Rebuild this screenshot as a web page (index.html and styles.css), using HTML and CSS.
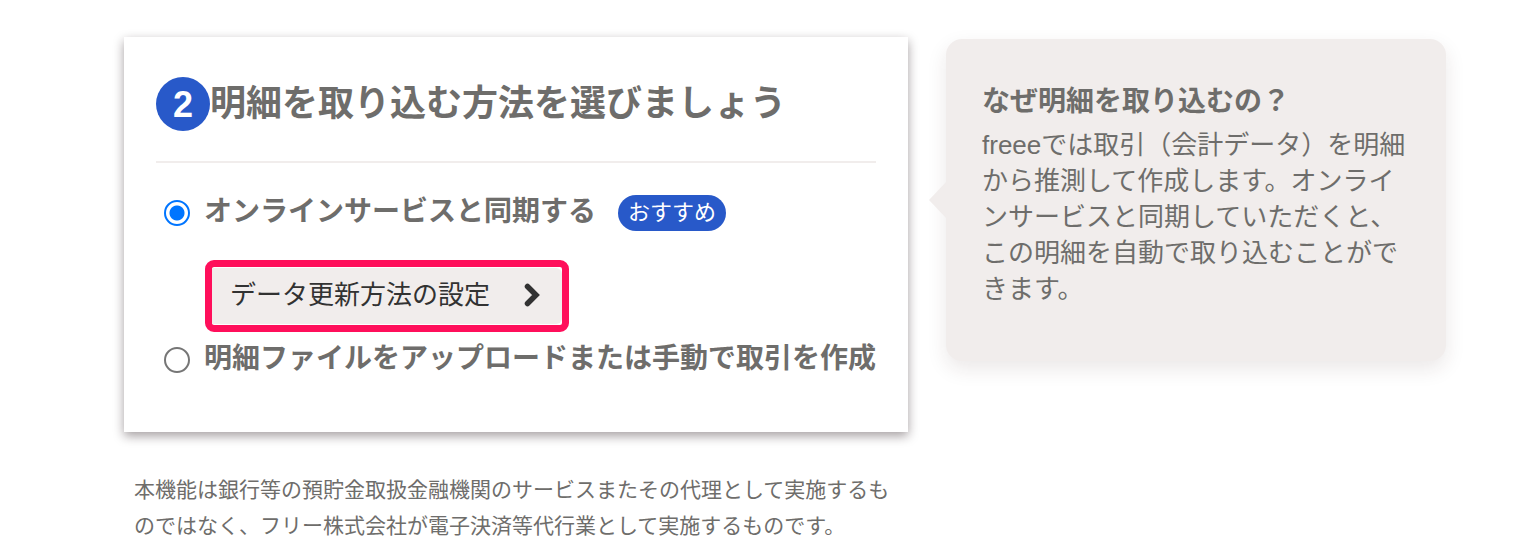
FILE: index.html
```
<!DOCTYPE html>
<html lang="ja">
<head>
<meta charset="utf-8">
<meta name="viewport" content="width=device-width, initial-scale=1">
<title>明細を取り込む方法</title>
<link rel="stylesheet" href="styles.css">
</head>
<body>
<div class="page">
  <main class="main">
    <section class="card">
      <h1 class="card-title"><span class="step">2</span>明細を取り込む方法を選びましょう</h1>
      <form class="options">
        <div class="option">
          <input class="radio" type="radio" name="method" id="method-sync" checked>
          <label class="option-label" for="method-sync">オンラインサービスと同期する</label>
          <span class="badge">おすすめ</span>
        </div>
        <div class="highlight">
          <button class="settings-button" type="button">
            <span>データ更新方法の設定</span>
            <svg class="chevron" viewBox="0 0 16 24" width="16" height="24" aria-hidden="true"><path d="M3.500 3.500 L12 12 L3.500 20.500" fill="none" stroke="currentColor" stroke-width="5.500" stroke-linecap="round" stroke-linejoin="miter"/></svg>
          </button>
        </div>
        <div class="option">
          <input class="radio" type="radio" name="method" id="method-file">
          <label class="option-label" for="method-file">明細ファイルをアップロードまたは手動で取引を作成</label>
        </div>
      </form>
    </section>
    <p class="note">本機能は銀行等の預貯金取扱金融機関のサービスまたその代理として実施するものではなく、フリー株式会社が電子決済等代行業として実施するものです。</p>
  </main>
  <aside class="tip">
    <h2 class="tip-title">なぜ明細を取り込むの？</h2>
    <p class="tip-text">freeeでは取引（会計データ）を明細から推測して作成します。オンラインサービスと同期していただくと、この明細を自動で取り込むことができます。</p>
  </aside>
</div>
</body>
</html>
```
FILE: styles.css
```
* {
  box-sizing: border-box;
}

body {
  margin: 0;
  background: #fff;
  color: #6e6d6b;
  font-family: "Liberation Sans", "Noto Sans CJK JP", sans-serif;
}

h1, h2, p {
  margin: 0;
}

.page {
  display: grid;
  grid-template-columns: 784fr 500fr;
  align-items: start;
  gap: 38px;
  padding: 37px 92px 0 124px;
}

.card {
  padding: 39px 32px 54px;
  background: #fff;
  box-shadow: 0 4px 10px rgba(30, 15, 20, 0.4);
}

.card-title {
  display: flex;
  align-items: center;
  padding-bottom: 29px;
  border-bottom: 2px solid #f1edec;
  font-size: 36px;
  line-height: 56px;
}

.step {
  flex: none;
  width: 54px;
  height: 54px;
  border-radius: 50%;
  background: #2859c9;
  color: #fff;
  text-align: center;
}

.options {
  padding: 32px 0 0 8px;
}

.option {
  display: flex;
  align-items: center;
  min-height: 36px;
}

.radio {
  appearance: none;
  flex: none;
  width: 26px;
  height: 26px;
  margin: 0 14px 0 0;
  border: 2px solid #767676;
  border-radius: 50%;
  background: #fff;
}

.radio:checked {
  border-color: #0075ff;
  background: radial-gradient(circle, #0075ff 7px, #fff 8px);
}

.option-label {
  font-size: 28px;
  font-weight: bold;
  line-height: 32px;
  padding-bottom: 2px;
}

.badge {
  margin-left: 22px;
  padding: 0 10px;
  border-radius: 18px;
  background: #2859c9;
  color: #fff;
  font-size: 22px;
  line-height: 36px;
}

.highlight {
  width: 364px;
  margin: 29px 0 10px 41px;
  padding: 1px 0;
  border: 7px solid #ff0f5b;
  border-radius: 9px;
}

.settings-button {
  display: flex;
  align-items: center;
  justify-content: space-between;
  width: 100%;
  height: 56px;
  padding: 0 22px 2px 18px;
  border: 0;
  border-radius: 0 6px 6px 0;
  background: #f1edec;
  color: #323232;
  font: inherit;
  font-size: 26px;
  line-height: 38px;
}

.note {
  padding: 40px 10px 0;
  font-size: 21px;
  line-height: 36px;
}

.tip {
  position: relative;
  margin-top: 2px;
  padding: 42px 36px 54px;
  border-radius: 16px;
  background: #f1edec;
  box-shadow: 0 8px 20px rgba(60, 30, 30, 0.1);
}

.tip::before {
  content: "";
  position: absolute;
  top: 143px;
  left: -17px;
  border: solid transparent;
  border-width: 18px 17px 18px 0;
  border-right-color: #f1edec;
}

.tip-title {
  font-size: 28px;
  line-height: 42px;
  margin-bottom: 4px;
}

.tip-text {
  font-size: 26px;
  line-height: 36px;
}
```
